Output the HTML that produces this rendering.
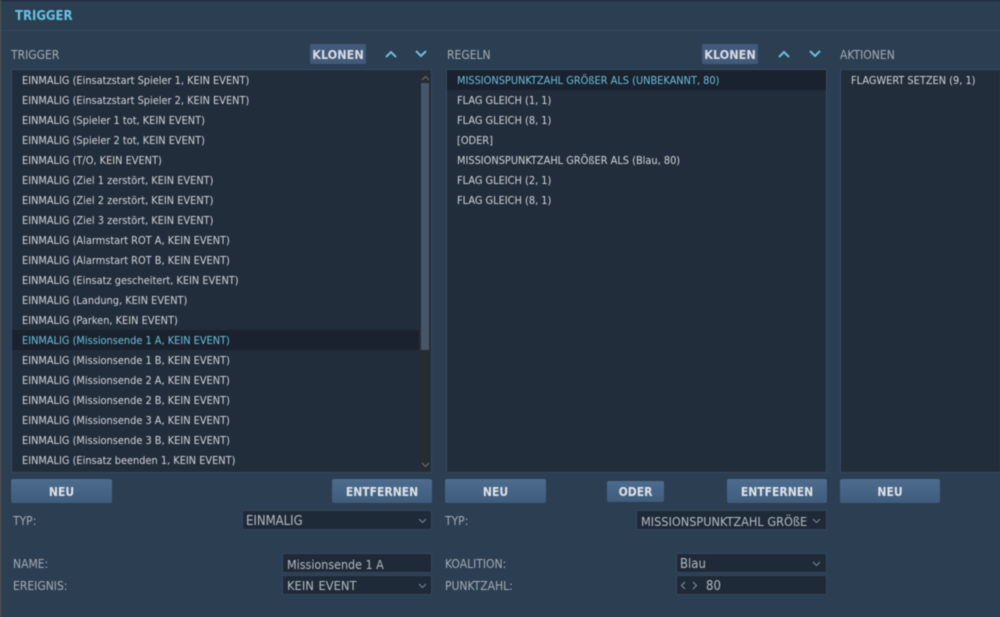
<!DOCTYPE html>
<html><head><meta charset="utf-8"><style>
html,body{margin:0;padding:0;width:1000px;height:617px;overflow:hidden;background:#2c3e52;font-family:"DejaVu Sans Condensed","DejaVu Sans",sans-serif;font-stretch:condensed;}
#w{position:absolute;left:0;top:0;width:1000px;height:617px;overflow:hidden;filter:blur(.45px);}
.a{position:absolute;white-space:nowrap;}
.lbl{color:#a5adb5;font-size:12px;line-height:16px;}
.list{position:absolute;background:#222d3b;border:1px solid #364b63;box-sizing:border-box;overflow:hidden;}
.row{position:absolute;left:0;right:0;height:20px;line-height:22px;font-size:10.9px;color:#d2d6da;white-space:nowrap;}
.sel{background:#19222e;color:#6cc0dc;}
.btn{position:absolute;height:24px;background:linear-gradient(#4d6c8e,#3f5c7c);border-radius:2px;color:#dfe3e7;font-weight:bold;font-size:12px;line-height:26px;text-align:center;}
.kl{position:absolute;top:44px;height:20px;background:#41597a;border-radius:1px;color:#d9dde2;font-weight:bold;font-size:12.5px;line-height:21px;text-align:center;}
.in{position:absolute;background:#1f2a38;border:1px solid #34485f;box-sizing:border-box;color:#b4bac1;font-size:13px;height:20px;line-height:21px;white-space:nowrap;overflow:hidden;}
svg{position:absolute;overflow:visible;}
</style></head><body><div id="w">
<div class="a" style="left:0;top:0;width:1000px;height:1px;background:#1c2836"></div>
<div class="a" style="left:0;top:30px;width:1000px;height:1px;background:#394d64"></div>
<div class="a" style="left:0;top:0;width:1px;height:617px;background:#5c5a48"></div>
<div class="a" style="left:15px;top:9px;color:#66c3e2;font-weight:bold;font-size:13px;line-height:15px">TRIGGER</div>

<div class="a lbl" style="left:11px;top:47px">TRIGGER</div>
<div class="kl" style="left:310px;width:56px">KLONEN</div>
<svg style="left:385px;top:50px" width="12" height="8"><path d="M1 7L6 2L11 7" fill="none" stroke="#6cc0dc" stroke-width="2"/></svg>
<svg style="left:415px;top:50px" width="12" height="8"><path d="M1 1L6 6L11 1" fill="none" stroke="#6cc0dc" stroke-width="2"/></svg>

<div class="a lbl" style="left:447px;top:47px">REGELN</div>
<div class="kl" style="left:702px;width:56px">KLONEN</div>
<svg style="left:778px;top:50px" width="12" height="8"><path d="M1 7L6 2L11 7" fill="none" stroke="#6cc0dc" stroke-width="2"/></svg>
<svg style="left:809px;top:50px" width="12" height="8"><path d="M1 1L6 6L11 1" fill="none" stroke="#6cc0dc" stroke-width="2"/></svg>
<div class="a lbl" style="left:840px;top:47px">AKTIONEN</div>

<div class="list" style="left:11px;top:69px;width:421px;height:404px">
<div class="row" style="top:0;padding-left:10px">EINMALIG (Einsatzstart Spieler 1, KEIN EVENT)</div>
<div class="row" style="top:20px;padding-left:10px">EINMALIG (Einsatzstart Spieler 2, KEIN EVENT)</div>
<div class="row" style="top:40px;padding-left:10px">EINMALIG (Spieler 1 tot, KEIN EVENT)</div>
<div class="row" style="top:60px;padding-left:10px">EINMALIG (Spieler 2 tot, KEIN EVENT)</div>
<div class="row" style="top:80px;padding-left:10px">EINMALIG (T/O, KEIN EVENT)</div>
<div class="row" style="top:100px;padding-left:10px">EINMALIG (Ziel 1 zerstört, KEIN EVENT)</div>
<div class="row" style="top:120px;padding-left:10px">EINMALIG (Ziel 2 zerstört, KEIN EVENT)</div>
<div class="row" style="top:140px;padding-left:10px">EINMALIG (Ziel 3 zerstört, KEIN EVENT)</div>
<div class="row" style="top:160px;padding-left:10px">EINMALIG (Alarmstart ROT A, KEIN EVENT)</div>
<div class="row" style="top:180px;padding-left:10px">EINMALIG (Alarmstart ROT B, KEIN EVENT)</div>
<div class="row" style="top:200px;padding-left:10px">EINMALIG (Einsatz gescheitert, KEIN EVENT)</div>
<div class="row" style="top:220px;padding-left:10px">EINMALIG (Landung, KEIN EVENT)</div>
<div class="row" style="top:240px;padding-left:10px">EINMALIG (Parken, KEIN EVENT)</div>
<div class="row sel" style="top:260px;padding-left:10px">EINMALIG (Missionsende 1 A, KEIN EVENT)</div>
<div class="row" style="top:280px;padding-left:10px">EINMALIG (Missionsende 1 B, KEIN EVENT)</div>
<div class="row" style="top:300px;padding-left:10px">EINMALIG (Missionsende 2 A, KEIN EVENT)</div>
<div class="row" style="top:320px;padding-left:10px">EINMALIG (Missionsende 2 B, KEIN EVENT)</div>
<div class="row" style="top:340px;padding-left:10px">EINMALIG (Missionsende 3 A, KEIN EVENT)</div>
<div class="row" style="top:360px;padding-left:10px">EINMALIG (Missionsende 3 B, KEIN EVENT)</div>
<div class="row" style="top:380px;padding-left:10px">EINMALIG (Einsatz beenden 1, KEIN EVENT)</div>
<div class="a" style="left:407px;top:0;width:12px;height:402px;background:#272c33"></div>
<div class="a" style="left:409px;top:13px;width:8px;height:267px;background:#45566b"></div>
<svg style="left:409px;top:5px" width="9" height="6"><path d="M1 5L4.5 1.5L8 5" fill="none" stroke="#6d757e" stroke-width="1"/></svg>
<svg style="left:409px;top:392px" width="9" height="6"><path d="M1 1L4.5 4.5L8 1" fill="none" stroke="#6d757e" stroke-width="1"/></svg>
</div>

<div class="list" style="left:446px;top:69px;width:381px;height:404px">
<div class="row sel" style="top:0;padding-left:10px">MISSIONSPUNKTZAHL GRÖßER ALS (UNBEKANNT, 80)</div>
<div class="row" style="top:20px;padding-left:10px">FLAG GLEICH (1, 1)</div>
<div class="row" style="top:40px;padding-left:10px">FLAG GLEICH (8, 1)</div>
<div class="row" style="top:60px;padding-left:10px">[ODER]</div>
<div class="row" style="top:80px;padding-left:10px">MISSIONSPUNKTZAHL GRÖßER ALS (Blau, 80)</div>
<div class="row" style="top:100px;padding-left:10px">FLAG GLEICH (2, 1)</div>
<div class="row" style="top:120px;padding-left:10px">FLAG GLEICH (8, 1)</div>
</div>

<div class="list" style="left:840px;top:69px;width:170px;height:404px">
<div class="row" style="top:0;padding-left:10px">FLAGWERT SETZEN (9, 1)</div>
</div>

<div class="btn" style="left:11px;top:479px;width:101px">NEU</div>
<div class="btn" style="left:332px;top:479px;width:100px">ENTFERNEN</div>
<div class="btn" style="left:445px;top:479px;width:101px">NEU</div>
<div class="btn" style="left:607px;top:481px;width:57px;height:21px;line-height:22px">ODER</div>
<div class="btn" style="left:727px;top:479px;width:100px">ENTFERNEN</div>
<div class="btn" style="left:840px;top:479px;width:100px">NEU</div>

<div class="a lbl" style="left:13px;top:513px">TYP:</div>
<div class="a lbl" style="left:13px;top:556px">NAME:</div>
<div class="a lbl" style="left:13px;top:578px">EREIGNIS:</div>
<div class="a lbl" style="left:445px;top:513px">TYP:</div>
<div class="a lbl" style="left:445px;top:556px">KOALITION:</div>
<div class="a lbl" style="left:445px;top:578px">PUNKTZAHL:</div>

<div class="in" style="left:242px;top:510px;width:190px;padding-left:3px;line-height:22px">EINMALIG</div>
<svg style="left:418px;top:518px" width="9" height="6"><path d="M1 1L4.5 4.5L8 1" fill="none" stroke="#7d8791" stroke-width="1"/></svg>
<div class="in" style="left:282px;top:553px;width:150px;padding-left:4px;font-size:12.4px">Missionsende 1 A</div>
<div class="in" style="left:282px;top:575px;width:150px;padding-left:4px;word-spacing:1px;font-size:12.8px">KEIN EVENT</div>
<svg style="left:418px;top:583px" width="9" height="6"><path d="M1 1L4.5 4.5L8 1" fill="none" stroke="#7d8791" stroke-width="1"/></svg>

<div class="in" style="left:636px;top:510px;width:191px;padding-left:4px;font-size:12.6px;line-height:22px"><span style="display:block;width:167px;overflow:hidden">MISSIONSPUNKTZAHL GRÖßER ALS</span></div>
<svg style="left:812px;top:518px" width="9" height="6"><path d="M1 1L4.5 4.5L8 1" fill="none" stroke="#7d8791" stroke-width="1"/></svg>
<div class="in" style="left:676px;top:553px;width:151px;padding-left:3px">Blau</div>
<svg style="left:812px;top:561px" width="9" height="6"><path d="M1 1L4.5 4.5L8 1" fill="none" stroke="#7d8791" stroke-width="1"/></svg>
<div class="in" style="left:676px;top:575px;width:151px;padding-left:29px">80</div>
<svg style="left:680px;top:581px" width="18" height="9"><path d="M5 1L1.5 4.5L5 8M13 1L16.5 4.5L13 8" fill="none" stroke="#8a939c" stroke-width="1"/></svg>
</div></body></html>
